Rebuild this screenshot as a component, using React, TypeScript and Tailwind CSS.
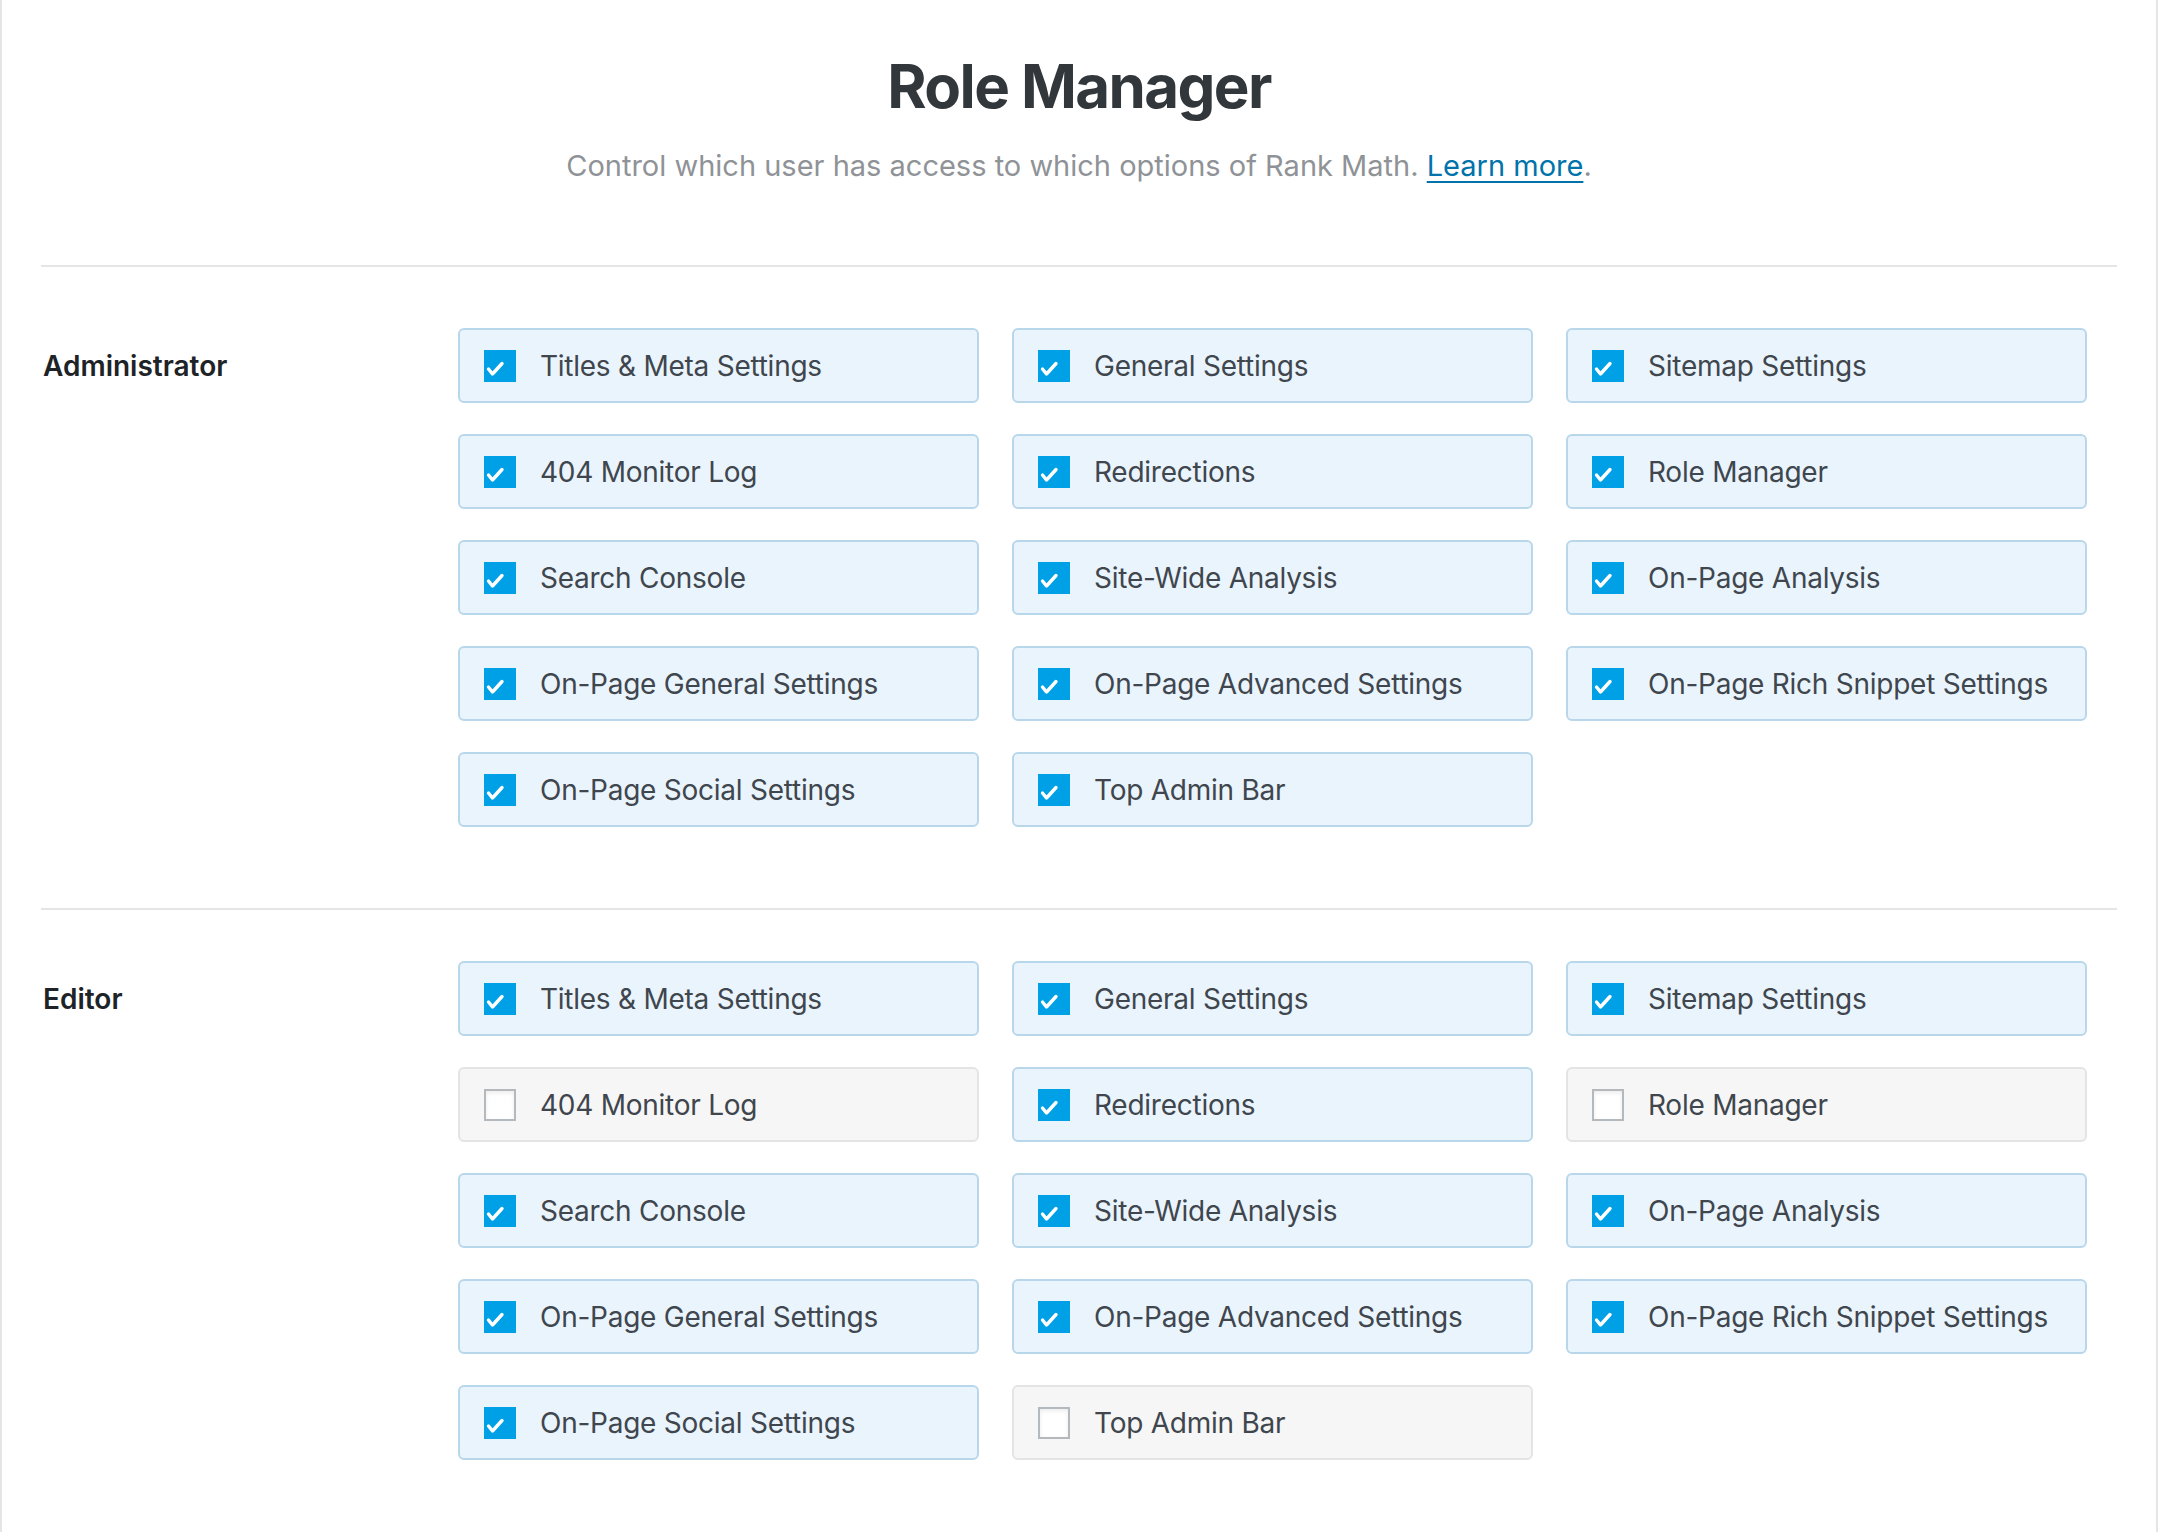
import React from "react";

const ITEMS = [
  "Titles & Meta Settings",
  "General Settings",
  "Sitemap Settings",
  "404 Monitor Log",
  "Redirections",
  "Role Manager",
  "Search Console",
  "Site-Wide Analysis",
  "On-Page Analysis",
  "On-Page General Settings",
  "On-Page Advanced Settings",
  "On-Page Rich Snippet Settings",
  "On-Page Social Settings",
  "Top Admin Bar",
];

const EDITOR_UNCHECKED = new Set(["404 Monitor Log", "Role Manager", "Top Admin Bar"]);

function Check({ checked }: { checked: boolean }) {
  if (checked) {
    return (
      <span className="flex h-[32px] w-[32px] shrink-0 bg-[#00a0e6]">
        <svg width="32" height="32" viewBox="0 0 32 32">
          <path d="M4.5 19 L8.5 24 L18 13.5" fill="none" stroke="#ffffff" strokeWidth="3.4" strokeLinecap="round" strokeLinejoin="round" />
        </svg>
      </span>
    );
  }
  return (
    <span className="block h-[32px] w-[32px] shrink-0 border-2 border-[#b4b9be] bg-white shadow-[inset_0_2px_4px_rgba(0,0,0,0.08)]" />
  );
}

function Item({ label, checked }: { label: string; checked: boolean }) {
  return (
    <div
      className={
        checked
          ? "flex h-[75px] w-[521px] items-center rounded-[6px] border-2 border-[#b9d7ea] bg-[#eaf4fd] pl-[24px]"
          : "flex h-[75px] w-[521px] items-center rounded-[6px] border-2 border-[#e3e4e6] bg-[#f6f6f6] pl-[24px]"
      }
    >
      <Check checked={checked} />
      <span className="ml-[24px] text-[28px] leading-none tracking-[-0.25px] text-[#40464d]">{label}</span>
    </div>
  );
}

function Section({ title, unchecked }: { title: string; unchecked: Set<string> }) {
  return (
    <div className="flex">
      <div className="flex h-[75px] w-[417px] shrink-0 items-center pl-[2px]">
        <span className="text-[28px] font-semibold leading-none text-[#1e2327]">{title}</span>
      </div>
      <div className="grid grid-cols-[521px_521px_521px] gap-x-[33px] gap-y-[31px]">
        {ITEMS.map((it) => (
          <Item key={it} label={it} checked={!unchecked.has(it)} />
        ))}
      </div>
    </div>
  );
}

export default function App() {
  return (
    <div
      className="h-[1532px] w-[2158px] border-x-2 border-[#e5e5e5] bg-white"
      style={{ fontFamily: "Inter, 'Noto Sans', sans-serif" }}
    >
      <div className="pt-[50px] text-center">
        <h1 className="text-[60px] font-bold leading-[72px] tracking-[-1.6px] text-[#32373c]">Role Manager</h1>
        <p className="mt-[26px] text-[29px] leading-[36px] text-[#8f9397]">
          Control which user has access to which options of Rank Math.{" "}
          <a href="#" className="text-[#0073aa] underline decoration-2 underline-offset-[5px]">
            Learn more
          </a>
          .
        </p>
      </div>
      <div className="mx-[39px] mt-[81px] h-[2px] bg-[#e5e5e5]" />
      <div className="pl-[39px] pt-[61px]">
        <Section title="Administrator" unchecked={new Set()} />
      </div>
      <div className="mx-[39px] mt-[81px] h-[2px] bg-[#e5e5e5]" />
      <div className="pl-[39px] pt-[51px]">
        <Section title="Editor" unchecked={EDITOR_UNCHECKED} />
      </div>
    </div>
  );
}
